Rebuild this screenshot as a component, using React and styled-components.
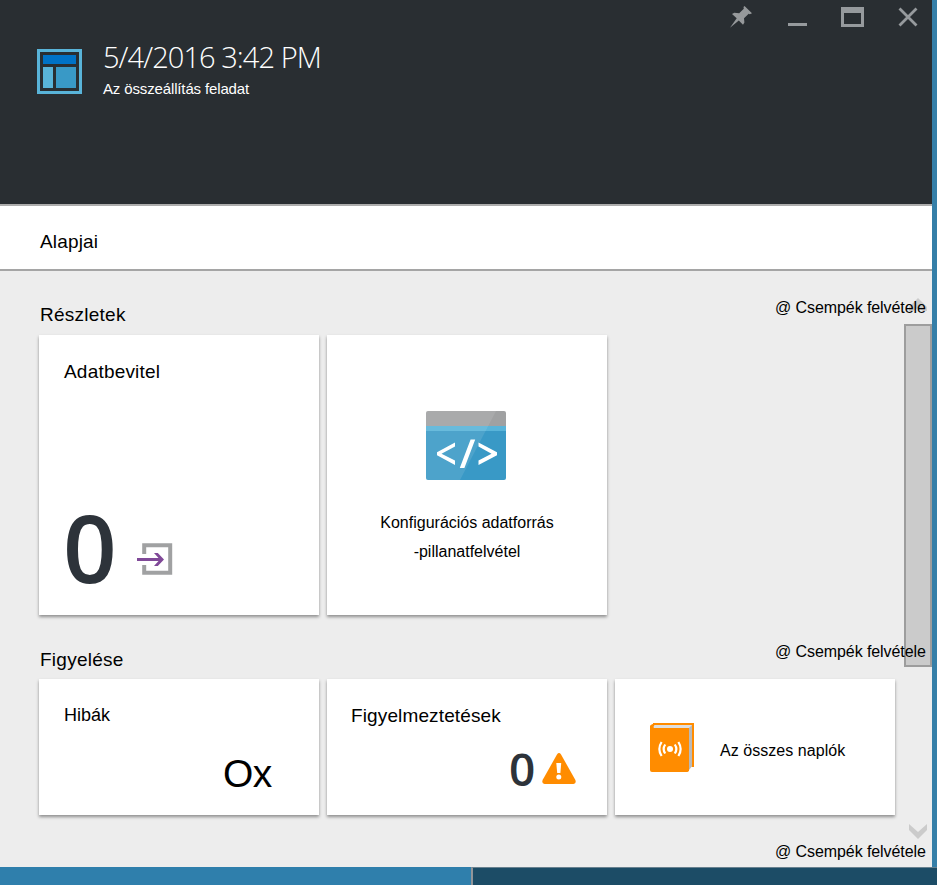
import React from "react";
import styled, { createGlobalStyle } from "styled-components";

const Global = createGlobalStyle`
  * { box-sizing: border-box; }
  body { margin: 0; background: #ededed; overflow: hidden; font-family: "Liberation Sans", Arial, sans-serif; color: #000; }
  svg { display: block; flex: none; }
`;

const Page = styled.div`
  width: 937px;
  height: 885px;
  display: flex;
  flex-direction: column;
`;
const Blade = styled.main`
  height: 867px;
  border-right: 5px solid #357fa8;
  background: #ededed;
  display: flex;
  flex-direction: column;
`;
const Header = styled.header`
  height: 206px;
  flex: none;
  background: #292e32;
  border-bottom: 2px solid #adadad;
  display: flex;
  justify-content: space-between;
`;
const Heading = styled.div`
  display: flex;
  padding: 38px 0 0 37px;
  gap: 21px;
`;
const HeadingIcon = styled.div`
  padding-top: 11px;
`;
const Title = styled.h1`
  margin: 0;
  font: 300 29px/38px "Open Sans", sans-serif;
  letter-spacing: -0.93px;
  color: #fff;
  white-space: nowrap;
`;
const Subtitle = styled.p`
  margin: 3px 0 0;
  font-size: 15px;
  line-height: 20px;
  letter-spacing: -0.14px;
  color: #fff;
`;
const Controls = styled.nav`
  display: flex;
  padding: 5px 14px 0 0;
  height: 30px;
`;
const ControlButton = styled.button`
  width: ${(p) => p.$width}px;
  height: 24px;
  padding: 0;
  border: 0;
  background: none;
  display: flex;
  justify-content: flex-end;
`;
const Essentials = styled.section`
  height: 65px;
  flex: none;
  padding: 24px 40px 0;
  background: #fff;
  border-bottom: 2px solid #a5a5a5;
  font-size: 19px;
  line-height: 23px;
  letter-spacing: 0.15px;
`;
const Body = styled.div`
  position: relative;
  flex: 1;
  padding-top: 25px;
`;
const SectionHead = styled.div`
  height: ${(p) => p.$height}px;
  padding: 0 6px 0 40px;
  display: flex;
  justify-content: space-between;
`;
const SectionTitle = styled.h2`
  margin: ${(p) => p.$top}px 0 0;
  font-weight: 400;
  font-size: 19px;
  line-height: 24px;
  letter-spacing: 0.25px;
`;
const AddTiles = styled.a`
  position: relative;
  z-index: 2;
  width: 151px;
  font-size: 16px;
  line-height: 24px;
  letter-spacing: -0.08px;
  white-space: nowrap;
`;
const BottomAction = styled.div`
  display: flex;
  justify-content: flex-end;
  padding: 25px 6px 0 0;
`;
const Tiles = styled.div`
  display: grid;
  grid-template-columns: repeat(3, 280px);
  grid-auto-rows: ${(p) => p.$height}px;
  gap: 8px;
  padding-left: 39px;
  margin-bottom: ${(p) => p.$after || 0}px;
`;
const Tile = styled.article`
  background: #fff;
  box-shadow: 0 2px 3px rgba(0, 0, 0, 0.4);
  display: flex;
  flex-direction: column;
  padding: ${(p) => p.$pad};
`;
const CenteredTile = styled(Tile)`
  align-items: center;
  text-align: center;
`;
const RowTile = styled(Tile)`
  flex-direction: row;
  gap: 26px;
`;
const TileTitle = styled.h3`
  margin: 0;
  font-weight: 400;
  font-size: ${(p) => p.$size}px;
  line-height: 24px;
  letter-spacing: ${(p) => p.$spacing || 0}px;
`;
const Caption = styled.p`
  margin: ${(p) => p.$top}px 0 0 ${(p) => p.$left || 0}px;
  font-size: 16px;
  line-height: 29px;
  letter-spacing: ${(p) => p.$spacing || 0}px;
  white-space: pre-line;
`;
const Metric = styled.div`
  display: flex;
  align-items: flex-start;
  gap: ${(p) => p.$gap}px;
  margin: ${(p) => p.$margin};
`;
const Count = styled.span`
  font: 600 ${(p) => p.$size}px / ${(p) => p.$line}px "Open Sans", sans-serif;
  color: #2d333a;
`;
const ErrorCount = styled.span`
  font-size: 39px;
  line-height: 44px;
  letter-spacing: -0.5px;
`;
const IconOffset = styled.div`
  padding-top: ${(p) => p.$top}px;
`;
const Scrollbar = styled.div`
  position: absolute;
  top: 26px;
  right: 0;
  width: 28px;
  height: 544px;
  display: flex;
  flex-direction: column;
  align-items: center;
`;
const Thumb = styled.div`
  width: 28px;
  height: 343px;
  margin: 13px 0 157px;
  background: #cbcbcb;
  border: 2px solid #9d9d9d;
`;
const Footer = styled.footer`
  height: 18px;
  display: grid;
  grid-template-columns: 471px 1fr;
  background: #1c4c66;
`;
const FooterActive = styled.div`
  background: #2f7fac;
`;
const FooterRest = styled.div`
  border-left: 2px solid #929599;
  border-top: 1px solid #68818f;
`;

const DashboardIcon = () => (
  <svg width="45" height="45" viewBox="0 0 45 45">
    <path d="M1.5 1.5H43.5V43.5H1.5Z" fill="none" stroke="#59b4d9" strokeWidth="3" />
    <path d="M6 6H39V15H6Z" fill="#0072c6" />
    <path d="M6 18H16V39H6Z" fill="#59b4d9" />
    <path d="M19 18H39V39H19Z" fill="#3999c6" />
  </svg>
);
const PinIcon = () => (
  <svg width="22" height="23" viewBox="0 0 22 23">
    <path d="M14.5 1 22 8.3 19.8 9.2 18.7 8.8 14 13.2 14.4 17.5 13 19.7 8.8 15.4 0 22.8 6.7 13.2 2 9 4.3 7.8 9.2 8.3 13.8 3.7 13.5 2Z" fill="#96999b" />
  </svg>
);
const MinimizeIcon = () => (
  <svg width="19" height="23" viewBox="0 0 19 23"><path d="M0 18H19V21H0Z" fill="#969a9d" /></svg>
);
const MaximizeIcon = () => (
  <svg width="23" height="23" viewBox="0 0 23 23"><path fillRule="evenodd" d="M0 2H23V22H0ZM3 8V19H20V8Z" fill="#969a9d" /></svg>
);
const CloseIcon = () => (
  <svg width="20" height="23" viewBox="0 0 20 23"><path d="M1.5 3.5 18.5 20.5M18.5 3.5 1.5 20.5" stroke="#969a9d" strokeWidth="2.8" /></svg>
);
const CodeIcon = () => (
  <svg width="80" height="69" viewBox="0 0 80 69">
    <path d="M0 15H80V67Q80 69 78 69H2Q0 69 0 67Z" fill="#3999c6" />
    <path d="M2 0H78Q80 0 80 2V15H0V2Q0 0 2 0Z" fill="#a0a1a2" />
    <path d="M0 15H80V20H0Z" fill="#59b4d9" />
    <path d="M2 0H70L34 69H2Q0 69 0 67V2Q0 0 2 0Z" fill="#fff" opacity=".1" />
    <path d="M29 31.5V35.5L15.5 42.8 29 49.5V54L11 44.3V41.3ZM52.5 31.5V35.5L65.5 42.8 52.5 49.5V54L71 44.3V41.3ZM44.6 28.5H49.2L38.4 57H33.8Z" fill="#fff" />
  </svg>
);
const InputIcon = () => (
  <svg width="36" height="33" viewBox="0 0 36 33">
    <path d="M7.2 11V2.3H33.2V29.7H7.2V22" fill="none" stroke="#a0a1a2" strokeWidth="4" />
    <path d="M0 15H21.5L17 10H20.8L27 16.5 20.8 23H17L21.5 18H0Z" fill="#804998" />
  </svg>
);
const WarningIcon = () => (
  <svg width="34" height="31" viewBox="0 0 34 31">
    <path d="M15 1.5Q17-1.3 19 1.5L33.4 27Q34.5 30.5 31.5 31H2.5Q-.5 30.5.6 27Z" fill="#ff8c00" />
    <path d="M14.3 10H19.2L18.4 20H15.2Z" fill="#fff" />
    <circle cx="16.8" cy="24.1" r="2.5" fill="#fff" />
  </svg>
);
const LogIcon = () => (
  <svg width="44" height="49" viewBox="0 0 44 49">
    <path d="M3 0H44V44H3Z" fill="#ff8c00" />
    <path d="M4.5 2H42V43L38 48V6H2Z" fill="#dfdfdf" />
    <path d="M39 5 42 2V43L39 47Z" fill="#b9b9b9" />
    <path d="M0 3Q1 1 5 .5 2 3 4 5H39V48L37.5 49H2Q0 49 0 47Z" fill="#ff8c00" />
    <circle cx="20" cy="26" r="3" fill="#fff" />
    <path d="M15.2 21.5Q12.1 26 15.2 30.5M24.8 21.5Q27.9 26 24.8 30.5M11.6 19Q7.1 26 11.6 33M28.4 19Q32.9 26 28.4 33" fill="none" stroke="#fff" strokeWidth="2.2" />
  </svg>
);
const ScrollUpIcon = () => (
  <svg width="18" height="14" viewBox="0 0 18 14"><path d="M9 1 18 10V14H14L9 11 4 14H0V10Z" fill="#cbcbcb" /></svg>
);
const ScrollDownIcon = () => (
  <svg width="18" height="15" viewBox="0 0 18 15"><path d="M0 0 9 8 18 0V6L9 15 0 6Z" fill="#cbcbcb" /></svg>
);

export default function App() {
  return (
    <>
      <Global />
      <Page>
        <Blade>
          <Header>
            <Heading>
              <HeadingIcon><DashboardIcon /></HeadingIcon>
              <div>
                <Title>5/4/2016 3:42 PM</Title>
                <Subtitle>Az összeállítás feladat</Subtitle>
              </div>
            </Heading>
            <Controls>
              <ControlButton $width={22}><PinIcon /></ControlButton>
              <ControlButton $width={55}><MinimizeIcon /></ControlButton>
              <ControlButton $width={57}><MaximizeIcon /></ControlButton>
              <ControlButton $width={54}><CloseIcon /></ControlButton>
            </Controls>
          </Header>
          <Essentials>Alapjai</Essentials>
          <Body>
            <SectionHead $height={39}>
              <SectionTitle $top={7}>Részletek</SectionTitle>
              <AddTiles>@ Csempék felvétele</AddTiles>
            </SectionHead>
            <Tiles $height={280} $after={25}>
              <Tile $pad="25px 25px 0">
                <TileTitle $size={19} $spacing={0.2}>Adatbevitel</TileTitle>
                <Metric $gap={20} $margin="113px 0 0 -1px">
                  <Count $size={94} $line={100}>0</Count>
                  <IconOffset $top={46}><InputIcon /></IconOffset>
                </Metric>
              </Tile>
              <CenteredTile $pad="76px 2px 0 0">
                <CodeIcon />
                <Caption $top={28} $left={2}>{"Konfigurációs adatforrás\n-pillanatfelvétel"}</Caption>
              </CenteredTile>
            </Tiles>
            <SectionHead $height={39}>
              <SectionTitle $top={8}>Figyelése</SectionTitle>
              <AddTiles>@ Csempék felvétele</AddTiles>
            </SectionHead>
            <Tiles $height={136}>
              <Tile $pad="24px 25px 0">
                <TileTitle $size={18}>Hibák</TileTitle>
                <Metric $margin="25px 0 0 159px"><ErrorCount>Ox</ErrorCount></Metric>
              </Tile>
              <Tile $pad="25px 24px 0">
                <TileTitle $size={19} $spacing={0.13}>Figyelmeztetések</TileTitle>
                <Metric $gap={7} $margin="12px 0 0 158px">
                  <Count $size={46} $line={56}>0</Count>
                  <IconOffset $top={13}><WarningIcon /></IconOffset>
                </Metric>
              </Tile>
              <RowTile $pad="44px 35px 0">
                <LogIcon />
                <Caption $top={13} $spacing={0.05}>Az összes naplók</Caption>
              </RowTile>
            </Tiles>
            <BottomAction><AddTiles>@ Csempék felvétele</AddTiles></BottomAction>
            <Scrollbar>
              <ScrollUpIcon />
              <Thumb />
              <ScrollDownIcon />
            </Scrollbar>
          </Body>
        </Blade>
        <Footer><FooterActive /><FooterRest /></Footer>
      </Page>
    </>
  );
}
